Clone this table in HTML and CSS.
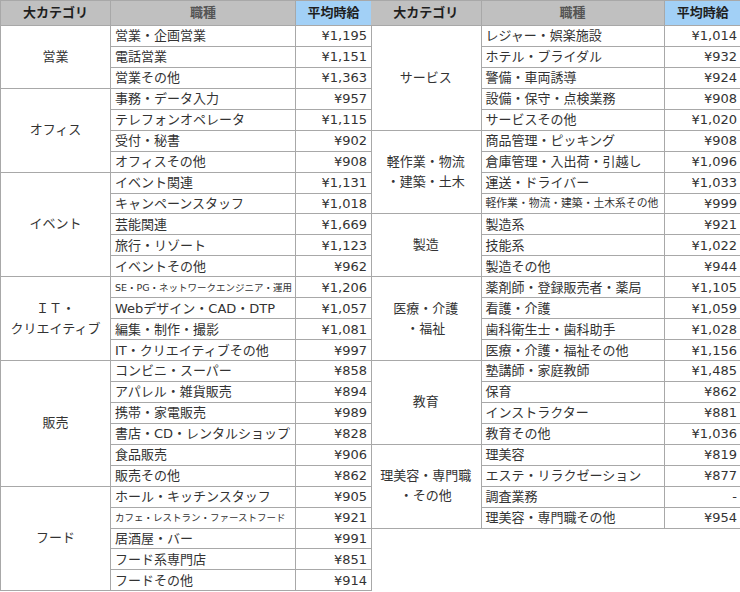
FILE: index.html
```html
<!DOCTYPE html>
<html lang="ja">
<head>
<meta charset="utf-8">
<title>平均時給</title>
<link rel="stylesheet" href="styles.css">
</head>
<body>
<div class="sheet">
<table class="wage left">
<colgroup><col class="c-cat"><col class="c-job"><col class="c-pay"></colgroup>
<thead><tr><th class="h-cat">大カテゴリ</th><th class="h-job">職種</th><th class="h-pay">平均時給</th></tr></thead>
<tbody>
<tr><td class="cat" rowspan="3">営業</td><td>営業・企画営業</td><td class="pay">¥1,195</td></tr>
<tr><td>電話営業</td><td class="pay">¥1,151</td></tr>
<tr><td>営業その他</td><td class="pay">¥1,363</td></tr>
<tr><td class="cat" rowspan="4">オフィス</td><td>事務・データ入力</td><td class="pay">¥957</td></tr>
<tr><td>テレフォンオペレータ</td><td class="pay">¥1,115</td></tr>
<tr><td>受付・秘書</td><td class="pay">¥902</td></tr>
<tr><td>オフィスその他</td><td class="pay">¥908</td></tr>
<tr><td class="cat" rowspan="5">イベント</td><td>イベント関連</td><td class="pay">¥1,131</td></tr>
<tr><td>キャンペーンスタッフ</td><td class="pay">¥1,018</td></tr>
<tr><td>芸能関連</td><td class="pay">¥1,669</td></tr>
<tr><td>旅行・リゾート</td><td class="pay">¥1,123</td></tr>
<tr><td>イベントその他</td><td class="pay">¥962</td></tr>
<tr><td class="cat" rowspan="4">ＩＴ・<br>クリエイティブ</td><td class="tiny">SE・PG・ネットワークエンジニア・運用</td><td class="pay">¥1,206</td></tr>
<tr><td>Webデザイン・CAD・DTP</td><td class="pay">¥1,057</td></tr>
<tr><td>編集・制作・撮影</td><td class="pay">¥1,081</td></tr>
<tr><td>IT・クリエイティブその他</td><td class="pay">¥997</td></tr>
<tr><td class="cat" rowspan="6">販売</td><td>コンビニ・スーパー</td><td class="pay">¥858</td></tr>
<tr><td>アパレル・雑貨販売</td><td class="pay">¥894</td></tr>
<tr><td>携帯・家電販売</td><td class="pay">¥989</td></tr>
<tr><td>書店・CD・レンタルショップ</td><td class="pay">¥828</td></tr>
<tr><td>食品販売</td><td class="pay">¥906</td></tr>
<tr><td>販売その他</td><td class="pay">¥862</td></tr>
<tr><td class="cat" rowspan="5">フード</td><td>ホール・キッチンスタッフ</td><td class="pay">¥905</td></tr>
<tr><td class="tiny">カフェ・レストラン・ファーストフード</td><td class="pay">¥921</td></tr>
<tr><td>居酒屋・バー</td><td class="pay">¥991</td></tr>
<tr><td>フード系専門店</td><td class="pay">¥851</td></tr>
<tr><td>フードその他</td><td class="pay">¥914</td></tr>
</tbody>
</table>
<table class="wage right">
<colgroup><col class="c-cat"><col class="c-job2"><col class="c-pay2"></colgroup>
<thead><tr><th class="h-cat">大カテゴリ</th><th class="h-job">職種</th><th class="h-pay">平均時給</th></tr></thead>
<tbody>
<tr><td class="cat" rowspan="5">サービス</td><td>レジャー・娯楽施設</td><td class="pay">¥1,014</td></tr>
<tr><td>ホテル・ブライダル</td><td class="pay">¥932</td></tr>
<tr><td>警備・車両誘導</td><td class="pay">¥924</td></tr>
<tr><td>設備・保守・点検業務</td><td class="pay">¥908</td></tr>
<tr><td>サービスその他</td><td class="pay">¥1,020</td></tr>
<tr><td class="cat" rowspan="4">軽作業・物流<br>・建築・土木</td><td>商品管理・ピッキング</td><td class="pay">¥908</td></tr>
<tr><td>倉庫管理・入出荷・引越し</td><td class="pay">¥1,096</td></tr>
<tr><td>運送・ドライバー</td><td class="pay">¥1,033</td></tr>
<tr><td class="small">軽作業・物流・建築・土木系その他</td><td class="pay">¥999</td></tr>
<tr><td class="cat" rowspan="3">製造</td><td>製造系</td><td class="pay">¥921</td></tr>
<tr><td>技能系</td><td class="pay">¥1,022</td></tr>
<tr><td>製造その他</td><td class="pay">¥944</td></tr>
<tr><td class="cat" rowspan="4">医療・介護<br>・福祉</td><td>薬剤師・登録販売者・薬局</td><td class="pay">¥1,105</td></tr>
<tr><td>看護・介護</td><td class="pay">¥1,059</td></tr>
<tr><td>歯科衛生士・歯科助手</td><td class="pay">¥1,028</td></tr>
<tr><td>医療・介護・福祉その他</td><td class="pay">¥1,156</td></tr>
<tr><td class="cat" rowspan="4">教育</td><td>塾講師・家庭教師</td><td class="pay">¥1,485</td></tr>
<tr><td>保育</td><td class="pay">¥862</td></tr>
<tr><td>インストラクター</td><td class="pay">¥881</td></tr>
<tr><td>教育その他</td><td class="pay">¥1,036</td></tr>
<tr><td class="cat" rowspan="4">理美容・専門職<br>・その他</td><td>理美容</td><td class="pay">¥819</td></tr>
<tr><td>エステ・リラクゼーション</td><td class="pay">¥877</td></tr>
<tr><td>調査業務</td><td class="pay">-</td></tr>
<tr><td>理美容・専門職その他</td><td class="pay">¥954</td></tr>
</tbody>
</table>
</div>
</body>
</html>
```
FILE: styles.css
```css
html, body {
  margin: 0;
  padding: 0;
  background: #ffffff;
}
body {
  font-family: "DejaVu Sans", "Noto Sans CJK JP", sans-serif;
  font-size: 13px;
  color: #333333;
}
.sheet {
  display: flex;
  align-items: flex-start;
  width: 740px;
}
.wage {
  border-collapse: collapse;
  table-layout: fixed;
}
.left {
  width: 371px;
}
.right {
  width: 370px;
  margin-left: -1px;
}
.left .c-cat { width: 110px; }
.left .c-job { width: 185px; }
.left .c-pay { width: 76px; }
.right .c-cat { width: 110px; }
.c-job2 { width: 183px; }
.c-pay2 { width: 77px; }

.wage th,
.wage td {
  border: 1px solid #a8a8a8;
  padding: 0;
  white-space: nowrap;
  overflow: hidden;
}
.wage thead tr {
  height: 25px;
}
.wage tbody tr {
  height: 20.95px;
}
.wage th {
  background: #c0c0c0;
  font-weight: bold;
  color: #1e1e1e;
  text-align: center;
  line-height: 22px;
}
.wage th.h-job {
  color: #555555;
}
.wage th.h-pay {
  background: #a2d0f6;
}
.wage td {
  padding: 0 4px 0 4px;
  line-height: 19px;
  vertical-align: middle;
}
.wage td.cat {
  text-align: center;
  line-height: 20px;
  padding: 0;
}
.wage td.pay {
  text-align: right;
  padding-right: 4px;
}
.wage td.tiny {
  font-size: 9.5px;
}
.wage td.small {
  font-size: 10.8px;
}
.right td.cat {
  border-left: none;
}
.right th.h-cat {
  border-left: none;
}
.right th.h-pay,
.right td.pay {
  border-right: none;
}
```
